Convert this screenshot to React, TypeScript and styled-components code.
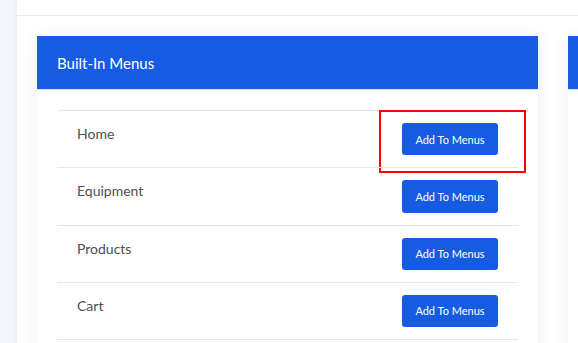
import React from 'react';
import styled, { createGlobalStyle } from 'styled-components';

const GlobalStyle = createGlobalStyle`
  html, body {
    margin: 0;
    padding: 0;
    background: #ffffff;
    font-family: Lato, "Liberation Sans", sans-serif;
  }
`;

const Page = styled.div`
  display: flex;
  width: 578px;
  height: 343px;
  overflow: hidden;
`;

const Rail = styled.div`
  width: 17px;
  flex: none;
  background: linear-gradient(to right, #f4f7fb 70%, #eef1f5);
`;

const Main = styled.div`
  flex: 1;
  min-width: 0;
  display: flex;
  flex-direction: column;
  background: #ffffff;
`;

const TopBar = styled.div`
  height: 15px;
  flex: none;
  border-bottom: 1px solid #e8e8e8;
`;

const Cards = styled.div`
  display: flex;
  gap: 30px;
  padding: 20px 0 0 20px;
`;

const Card = styled.section`
  width: 501px;
  flex: none;
  background: #ffffff;
  box-shadow: 0 0 18px rgba(0, 0, 0, 0.07);
`;

const CardHeader = styled.div`
  height: 53px;
  display: flex;
  align-items: center;
  padding: 0 20px;
  background: #165ce3;
  border-bottom: 1px solid #e1e8f6;
  color: #ffffff;
  font-size: 15px;
`;

const CardBody = styled.div`
  padding: 20px;
`;

const List = styled.ul`
  margin: 0;
  padding: 0;
  list-style: none;
`;

const Row = styled.li`
  position: relative;
  display: flex;
  justify-content: space-between;
  align-items: flex-start;
  padding: 12px 20px;
  border-top: 1px solid #e6e6e6;
  &:first-child {
    border-top-left-radius: 4px;
    border-top-right-radius: 4px;
  }
  &:last-child {
    border-bottom: 1px solid #e6e6e6;
  }
`;

const Label = styled.span`
  font-size: 14px;
  line-height: 21px;
  color: #4a4f55;
`;

const AddButton = styled.button`
  width: 96px;
  height: 32.25px;
  padding: 0;
  border: 0;
  border-radius: 3px;
  background: #165ce3;
  color: #ffffff;
  font-family: Lato, "Liberation Sans", sans-serif;
  font-size: 11px;
  cursor: pointer;
`;

const Highlight = styled.div`
  position: absolute;
  top: -1px;
  left: 322px;
  width: 143px;
  height: 59px;
  border: 2.5px solid #ff0000;
  pointer-events: none;
`;

const menus = ['Home', 'Equipment', 'Products', 'Cart'];

const App: React.FC = () => (
  <>
    <GlobalStyle />
    <Page>
      <Rail />
      <Main>
        <TopBar />
        <Cards>
          <Card>
            <CardHeader>Built-In Menus</CardHeader>
            <CardBody>
              <List>
                {menus.map((name, i) => (
                  <Row key={name}>
                    <Label>{name}</Label>
                    <AddButton>Add To Menus</AddButton>
                    {i === 0 && <Highlight />}
                  </Row>
                ))}
              </List>
            </CardBody>
          </Card>
          <Card>
            <CardHeader />
          </Card>
        </Cards>
      </Main>
    </Page>
  </>
);

export default App;
